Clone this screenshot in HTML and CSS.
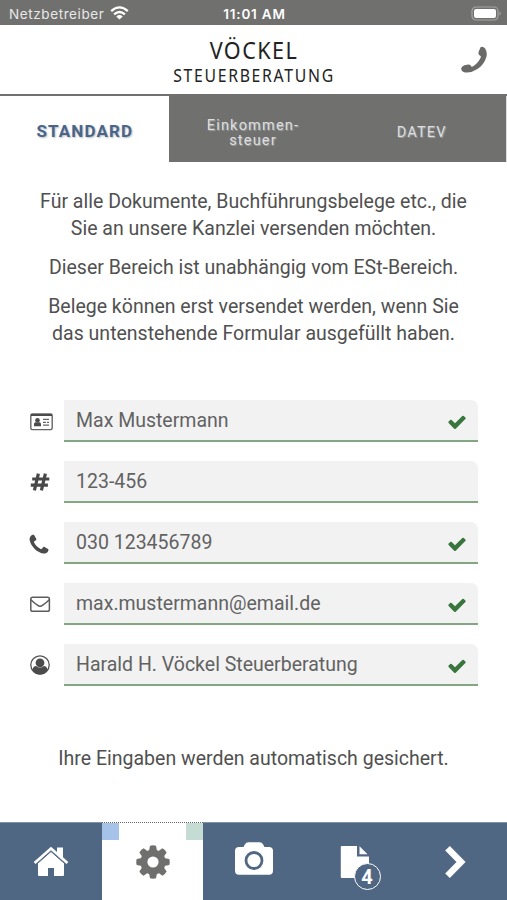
FILE: index.html
```html
<!DOCTYPE html>
<html lang="de">
<head>
<meta charset="utf-8">
<title>Vöckel Steuerberatung</title>
<link rel="stylesheet" href="styles.css">
</head>
<body>
<svg class="defs" width="0" height="0">
  <symbol id="check" viewBox="0 0 1792 1792"><path d="M1671 566q0 40-28 68l-724 724-136 136q-28 28-68 28t-68-28l-136-136-362-362q-28-28-28-68t28-68l136-136q28-28 68-28t68 28l294 295 656-657q28-28 68-28t68 28l136 136q28 28 28 68z"/></symbol>
</svg>
<div class="status">
  <div class="carrier"><span>Netzbetreiber</span>
    <svg width="19" height="14" viewBox="0 0 19 14" fill="none" stroke="#fff" stroke-width="2.3"><path d="M1.2 5.2Q9.5-2.4 17.8 5.2M4.1 8.3Q9.5 3.6 14.9 8.3"/><path d="M6.3 10.4Q9.5 7.8 12.7 10.4L9.5 13.6z" fill="#fff" stroke="none"/></svg>
  </div>
  <div class="time">11:01 AM</div>
  <div class="battery"><svg width="31" height="16" viewBox="0 0 31 16"><rect x="1" y="1" width="26" height="13" rx="4" fill="none" stroke="#a5a5a3" stroke-width="1.2"/><rect x="3" y="3" width="22" height="9" rx="2" fill="#fff"/><path d="M28.6 5.5q2 2 0 4z" fill="#b5b5b3"/></svg></div>
</div>
<header class="header">
  <div class="brand"><div class="brand-name">VÖCKEL</div><div class="brand-sub">STEUERBERATUNG</div></div>
  <svg class="call" width="28" height="28" viewBox="0 0 28 28"><path d="M20.500 1.200Q22.800-.3 25 2.200Q27.700 6.300 26.300 11.200Q23.800 19 17.400 23Q10.700 27.500 4.100 26.200Q.7 25.200 1.300 22.100Q1.800 20 4.400 19.200L8.300 18.500Q10.400 18.200 11.200 20.200Q11.700 21.200 13.200 20.300Q18.300 17.200 20.700 11.600Q21.300 10.100 19.800 9.400Q18.100 8.500 18.500 6.200Z"/></svg>
</header>
<nav class="tabs">
  <div class="tab active">STANDARD</div>
  <div class="tab">Einkommen-<br>steuer</div>
  <div class="tab">DATEV</div>
</nav>
<main>
  <section class="intro">
    <p>Für alle Dokumente, Buchführungsbelege etc., die<br>Sie an unsere Kanzlei versenden möchten.</p>
    <p>Dieser Bereich ist unabhängig vom ESt-Bereich.</p>
    <p>Belege können erst versendet werden, wenn Sie<br>das untenstehende Formular ausgefüllt haben.</p>
  </section>
  <section class="form">
    <div class="row">
      <svg class="ico" width="24" height="20" viewBox="0 0 24 20"><rect x=".8" y="2" width="21.400" height="15.600" rx="1.500" fill="none" stroke="#666" stroke-width="1.400"/><path d="M1 2h21v2H1zM4 14.200v-2q0-2 1.600-2h3.800q1.600 0 1.600 2v2z"/><circle cx="7.500" cy="8.200" r="2.300"/><path d="M13 7.400h6M13 10.400h3M17 10.400h2M13 13.200h6" stroke="#666" stroke-width="1.200"/></svg>
      <div class="field"><span>Max Mustermann</span><svg class="check"><use href="#check"/></svg></div>
    </div>
    <div class="row">
      <svg class="ico hash" width="24" height="20" viewBox="0 0 24 20"><path d="M8.400 1.600L4.400 18.400M15.400 1.600L11.400 18.400M2.200 7H19.300M.8 13.200H17.900" fill="none" stroke="#484848" stroke-width="3.200"/></svg>
      <div class="field"><span>123-456</span></div>
    </div>
    <div class="row">
      <svg class="ico phone" width="24" height="24" viewBox="0 0 1792 1792"><path d="M1600 1240q0 27-10 70.500t-21 68.500q-21 50-122 106-94 51-186 51-27 0-53-3.500t-57.500-12.500-47-14.500-55.500-20.500-49-18q-98-35-175-83-127-79-264-216t-216-264q-48-77-83-175-3-9-18-49t-20.500-55.500-14.500-47-12.500-57.500-3.500-53q0-92 51-186 56-101 106-122 25-11 68.500-21t70.500-10q14 0 21 3 18 6 53 76 11 19 30 54t35 63.500 31 53.500q3 4 17.500 25t21.500 35.500 7 28.500q0 20-28.500 50t-62 55-62 53-28.500 46q0 9 5 22.500t8.500 20.500 14 24 11.500 19q76 137 174 235t235 174q2 1 19 11.500t24 14 20.500 8.500 22.500 5q18 0 46-28.500t53-62 55-62 50-28.500q14 0 28.500 7t35.500 21.500 25 17.500q25 15 53.500 31t63.500 35 54 30q70 35 76 53 3 7 3 21z"/></svg>
      <div class="field"><span>030 123456789</span><svg class="check"><use href="#check"/></svg></div>
    </div>
    <div class="row">
      <svg class="ico" width="24" height="20" viewBox="0 0 24 20"><g fill="none" stroke="#5c5c5c" stroke-width="1.500"><rect x=".8" y="2.300" width="18.600" height="14" rx="1.800"/><path d="M1 4.700Q2.500 6.500 7.500 10.200Q10.100 12.300 12.700 10.200Q17.700 6.500 19.200 4.700"/></g></svg>
      <div class="field"><span>max.mustermann@email.de</span><svg class="check"><use href="#check"/></svg></div>
    </div>
    <div class="row">
      <svg class="ico user" width="24" height="20" viewBox="0 0 24 20"><circle cx="10" cy="10" r="9.200" fill="none" stroke="#555" stroke-width="1.300"/><circle cx="10" cy="7.800" r="4.400"/><path d="M2.500 15Q3.200 11 6 11Q10 14 14 11Q16.800 11 17.500 15Q14.800 19.500 10 19.500T2.500 15z"/></svg>
      <div class="field"><span>Harald H. Vöckel Steuerberatung</span><svg class="check"><use href="#check"/></svg></div>
    </div>
  </section>
  <p class="saved">Ihre Eingaben werden automatisch gesichert.</p>
</main>
<nav class="bottom">
  <div class="item"><svg width="36" height="31" viewBox="0 0 36 31" fill="#fff"><path d="M5 17L18 5.500L31 17V29Q31 30 30 30H21V22H15V30H6Q5 30 5 29z"/><path d="M18 .8L24 6V1.500H30V11.300L35.300 16L33.500 18L18 4.300L2.500 18L.7 16Z"/><path d="M4 17.900L18 5.500L32 17.900" fill="none" stroke="#506783"/></svg></div>
  <div class="item current"><svg width="34" height="34" viewBox="-17 -17 34 34"><g fill="#6f6f6d"><circle r="12.600"/><g id="teeth"><path id="tooth" d="M-4-11L-3-16.300Q0-17.200 3-16.300L4-11V11L3 16.300Q0 17.200-3 16.300L-4 11z"/><use href="#tooth" transform="rotate(90)"/></g><use href="#teeth" transform="rotate(45)"/></g><circle r="5.600" fill="#fff"/></svg></div>
  <div class="item camera"><svg width="40" height="36" viewBox="0 0 40 36"><path fill="#fff" d="M5 6H9.500L11 3.200Q12 1.200 14.500 1.200H25.500Q28 1.200 29 3.200L30.500 6H35Q39 6 39 10V29.500Q39 33.800 35 33.800H5Q1 33.800 1 29.500V10Q1 6 5 6z"/><circle cx="20" cy="19.500" r="8" fill="none" stroke="#506783" stroke-width="2.800"/></svg></div>
  <div class="item doc"><svg width="42" height="45" viewBox="0 0 42 45"><path fill="#fff" d="M2 1H17V11.500H29V33H2Q.8 33 .8 32V2Q.8 1 2 1z"/><path fill="#fff" d="M19.500 1.200L27.500 9.300H19.500z"/></svg><b>4</b></div>
  <div class="item"><svg width="24" height="34" viewBox="0 0 24 34"><path d="M3.500 3.300L17 17L3.500 30.700" fill="none" stroke="#fff" stroke-width="6.500"/></svg></div>
</nav>
</body>
</html>
```
FILE: styles.css
```css
* { box-sizing: border-box; }
body {
  margin: 0;
  height: 900px;
  display: flex;
  flex-direction: column;
  overflow: hidden;
  background: #fff;
  color: #505050;
  font-family: Roboto, "Liberation Sans", sans-serif;
}
p { margin: 0; }
svg { display: block; flex: none; }
.defs { position: absolute; }
.status {
  height: 25px;
  flex: none;
  display: grid;
  grid-template-columns: 1fr auto 1fr;
  align-items: center;
  padding: 2px 5px 0 9px;
  background: #70706e;
  color: #fff;
  font: 13.5px/20px Inter, sans-serif;
}
.carrier { display: flex; align-items: center; gap: 6px; color: #e8e8e8; letter-spacing: .6px; }
.carrier svg { margin-top: -2px; }
.time { font-weight: 600; font-size: 13.5px; letter-spacing: .8px; transform: translateX(-1px); }
.battery { display: flex; justify-content: flex-end; }
.header {
  height: 71px;
  flex: none;
  display: grid;
  grid-template-columns: 1fr 166px 1fr;
  border-bottom: 2px solid #70706e;
}
.brand {
  grid-column: 2;
  display: flex;
  flex-direction: column;
  align-items: center;
  padding-top: 11px;
  color: #222;
  font-family: "Noto Sans", sans-serif;
  white-space: nowrap;
  transform: scaleX(.9);
}
.brand-name { font-size: 24px; line-height: 27px; letter-spacing: 1.6px; }
.brand-sub { font-size: 17.5px; line-height: 24px; letter-spacing: 1.9px; }
.call { justify-self: end; margin: 21px 19px 0 0; fill: #6a6a69; }
.tabs { height: 66px; flex: none; display: grid; grid-template-columns: repeat(3, 1fr); background: #70706e; border-right: 1px solid #ddd; }
.tab {
  display: flex;
  align-items: center;
  justify-content: center;
  padding-top: 7px;
  color: #dedede;
  font-size: 14.5px;
  line-height: 15px;
  letter-spacing: 1.2px;
  text-align: center;
  text-shadow: 1px 1px 1px #a0a0a0;
}
.tab.active { padding: 5px 0 0 1px; background: #fff; color: #48658c; font-size: 17px; font-weight: 700; letter-spacing: 1.1px; text-shadow: 1px 1px 2px #bbb; }
.intro {
  padding-top: 26px;
  display: flex;
  flex-direction: column;
  gap: 12px;
  font-size: 19.5px;
  line-height: 27px;
  text-align: center;
  white-space: nowrap;
}
.form { display: flex; flex-direction: column; gap: 19px; padding: 53px 29px 0 30px; }
.row { height: 42px; display: grid; grid-template-columns: 34px 1fr; align-items: center; }
.ico { margin-top: 1px; fill: #4b4b4b; }
.ico.hash { margin-top: 0; }
.ico.user { margin-top: -1px; }
.ico.phone { margin: 3px 0 0 -3px; }
.field {
  height: 42px;
  display: flex;
  justify-content: space-between;
  align-items: center;
  padding: 0 11px 0 12px;
  background: #f2f2f2;
  border-bottom: 2px solid #82a782;
  border-radius: 0 7px 0 0;
  color: #626262;
  font-size: 19.5px;
}
.check { width: 20px; height: 20px; margin-top: 4px; fill: #39763d; }
.saved { padding-top: 59px; font-size: 19.5px; line-height: 27px; text-align: center; }
.bottom {
  height: 78px;
  flex: none;
  margin-top: auto;
  display: grid;
  grid-template-columns: 102px repeat(4, 1fr);
  background: #506783;
}
.item { display: flex; align-items: center; justify-content: center; border-top: 1px solid #8193a8; }
.current {
  border-top: 1px dotted #666;
  background: linear-gradient(#a5c2e8, #a5c2e8) left top / 17px 17px no-repeat, linear-gradient(#c4dcd3, #c4dcd3) right top / 17px 17px no-repeat, #fff;
}
.camera { padding-bottom: 5px; }
.doc { position: relative; padding: 12px 0 0 12px; }
.doc b {
  position: absolute;
  left: 49px;
  top: 40px;
  width: 27px;
  height: 27px;
  border: 1.5px solid #fff;
  border-radius: 50%;
  background: #506783;
  color: #fff;
  font-size: 20px;
  line-height: 26px;
  text-align: center;
}
```
